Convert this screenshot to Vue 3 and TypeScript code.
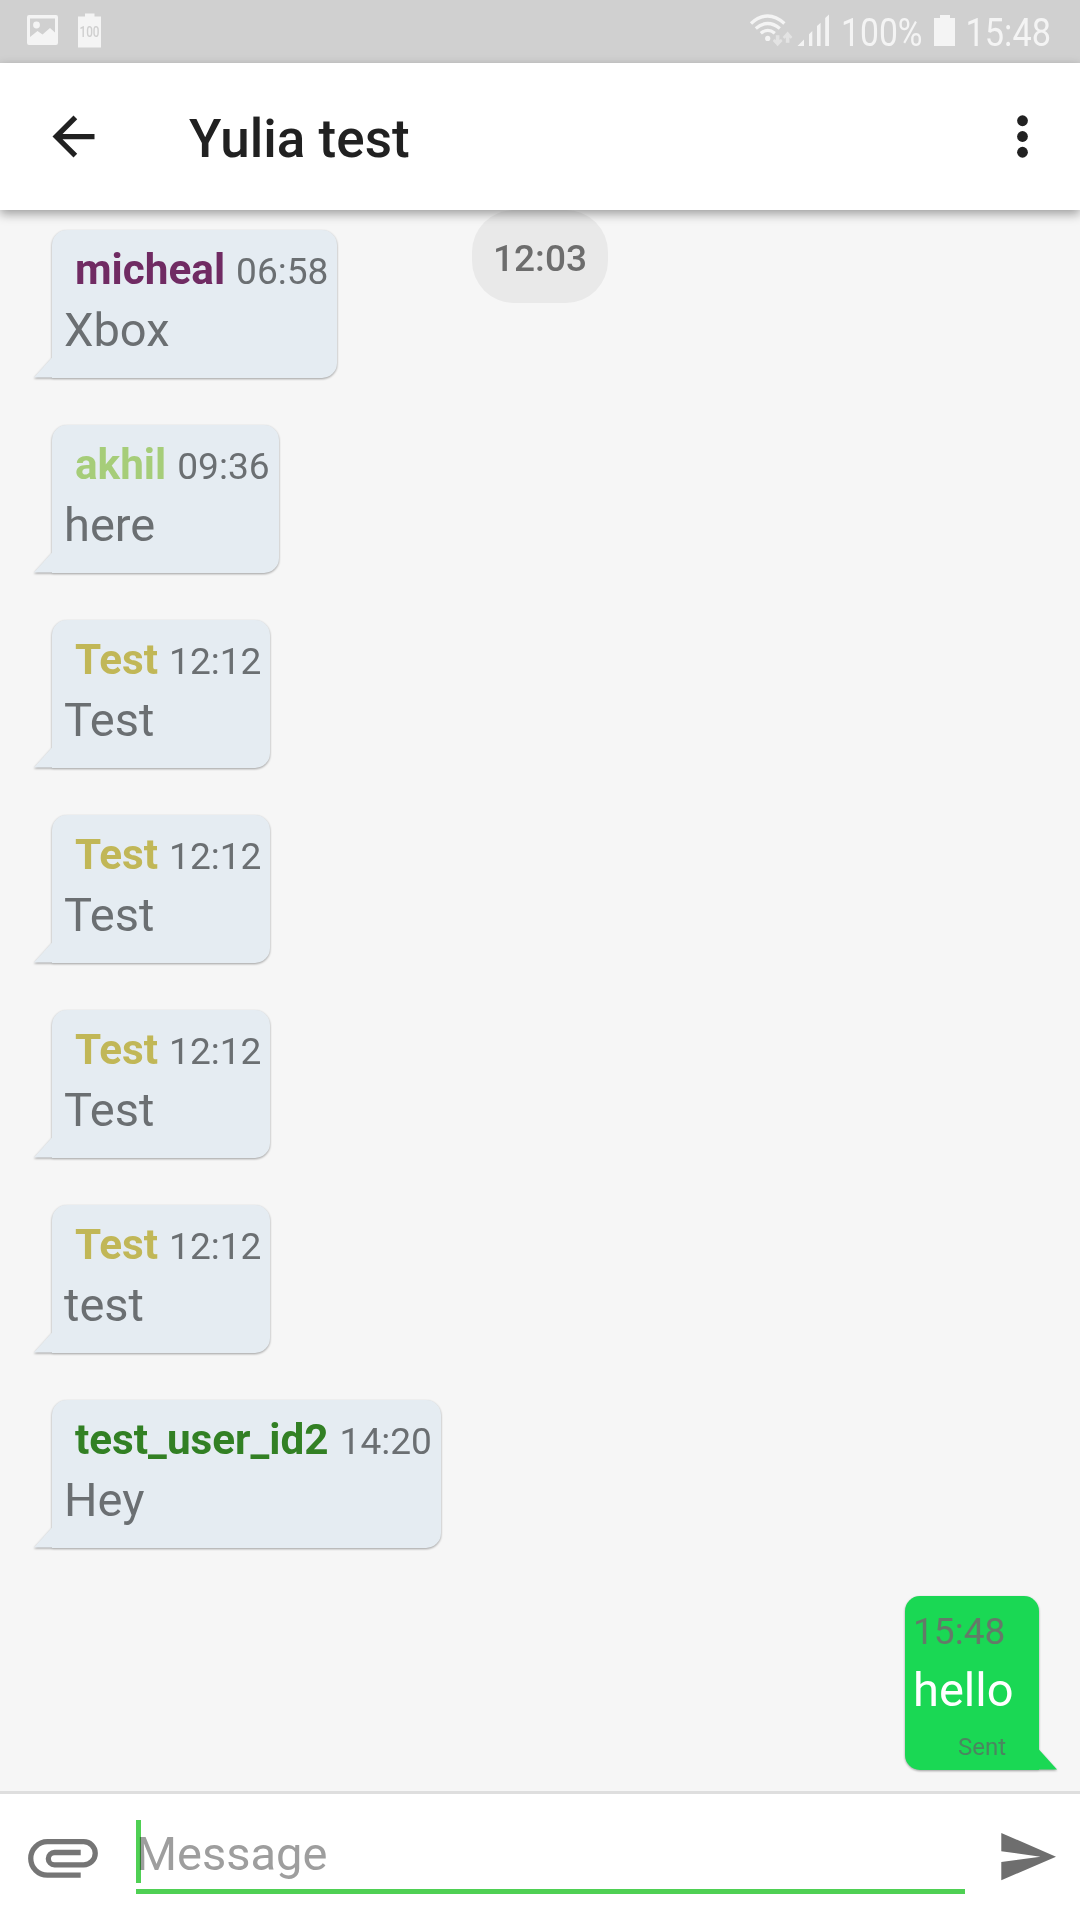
<script setup lang="ts">
interface Message {
  id: number
  author: string
  color: string
  time: string
  text: string
}

const messages: Message[] = [
  { id: 1, author: 'micheal', color: '#702b63', time: '06:58', text: 'Xbox' },
  { id: 2, author: 'akhil', color: '#a6cd79', time: '09:36', text: 'here' },
  { id: 3, author: 'Test', color: '#c1b757', time: '12:12', text: 'Test' },
  { id: 4, author: 'Test', color: '#c1b757', time: '12:12', text: 'Test' },
  { id: 5, author: 'Test', color: '#c1b757', time: '12:12', text: 'Test' },
  { id: 6, author: 'Test', color: '#c1b757', time: '12:12', text: 'test' },
  { id: 7, author: 'test_user_id2', color: '#328024', time: '14:20', text: 'Hey' },
]
</script>

<template>
  <div class="screen">
    <div class="status">
      <svg class="notes" width="120" height="63" viewBox="0 0 120 63">
        <path
          fill="#f4f4f4"
          fill-rule="evenodd"
          d="M29 15H56Q58 15 58 17V43Q58 45 56 45H29Q27 45 27 43V17Q27 15 29 15ZM30 18.500V37L37.500 31L42.500 34.500L50 28L55 32.500V18.500Z"
        />
        <circle cx="36.500" cy="25" r="3.400" fill="#f4f4f4" />
        <path fill="#f4f4f4" d="M85 13.500H94.500V16.500H101V47.500H78V16.500H85Z" />
        <text x="79.500" y="37" textLength="20" lengthAdjust="spacingAndGlyphs" font-size="14" font-weight="500" fill="#cfcfcf">100</text>
      </svg>
      <svg class="indicators" width="340" height="63" viewBox="740 0 340 63">
        <g fill="none" stroke="#f4f4f4" stroke-width="3.300">
          <path d="M751 23.500Q767.700 8.500 784.400 23.500" />
          <path d="M755.800 28.500Q767.700 18.500 779.800 28.500" />
          <path d="M760.800 33.300Q767.700 27.500 774.800 33.300" />
        </g>
        <circle cx="767.700" cy="38.400" r="2.600" fill="#f4f4f4" />
        <path
          fill="#e3e3e3"
          d="M775.800 35.300H779.400V40L781 39L782.500 41L777.600 46.300L772.800 41L774.300 39L775.800 40ZM785.800 42.800H789.400V37.500L790.800 38.800L792.400 37L787.600 31.500L782.700 37L784.300 38.800L785.800 37.500Z"
        />
        <path fill="#f4f4f4" d="M797.500 46L804 39.500V46ZM809 46V34.300L812.300 31V46ZM817 46V26L820.600 22.800V46ZM825.200 46V18L829 14.500V46Z" />
        <text x="841" y="46" textLength="81.500" lengthAdjust="spacingAndGlyphs" font-size="39" fill="#f4f4f4">100%</text>
        <path fill="#f4f4f4" d="M940 15H950V18H955V46H934V18H940Z" />
        <text x="965.500" y="46" textLength="85.500" lengthAdjust="spacingAndGlyphs" font-size="39" fill="#f4f4f4">15:48</text>
      </svg>
    </div>

    <header class="bar">
      <svg class="back" width="63" height="63" viewBox="0 0 24 24">
        <path fill="#212121" d="M20 11H7.830l5.590-5.590L12 4l-8 8 8 8 1.410-1.410L7.830 13H20v-2z" />
      </svg>
      <h1 class="title">Yulia test</h1>
      <svg class="more" width="63" height="63" viewBox="0 0 24 24" fill="#212121">
        <circle cx="12" cy="6" r="2.050" />
        <circle cx="12" cy="12" r="2.050" />
        <circle cx="12" cy="18" r="2.050" />
      </svg>
    </header>

    <main class="chat">
      <div class="chip">12:03</div>
      <article v-for="m in messages" :key="m.id" class="bubble in">
        <div class="meta">
          <span class="author" :style="{ color: m.color }">{{ m.author }}</span>
          <span class="time">{{ m.time }}</span>
        </div>
        <div class="text">{{ m.text }}</div>
      </article>
      <article class="bubble out">
        <span class="time">15:48</span>
        <span class="text">hello</span>
        <span class="state">Sent</span>
      </article>
    </main>

    <footer class="composer">
      <svg class="attach" width="76" height="45" viewBox="25 1836 76 45">
        <path
          fill="none"
          stroke="#757575"
          stroke-width="5.300"
          d="M80.700 1875.200H47.500A16.750 16.750 0 0 1 47.500 1841.700H83.700A11.550 11.550 0 0 1 83.700 1864.800H54.500A6.150 6.150 0 0 1 54.500 1852.500H80.700"
        />
      </svg>
      <div class="field">
        <span class="placeholder">Message</span>
        <i class="caret"></i>
      </div>
      <svg class="send" width="56" height="48" viewBox="0 0 56 48">
        <path fill="#6e6e6e" d="M.3 0L55 23.700L.3 47.300V29L39.500 23.700L.3 18.200Z" />
      </svg>
    </footer>
  </div>
</template>

<style>
body {
  margin: 0;
}
</style>

<style scoped>
.screen {
  width: 1080px;
  height: 1920px;
  display: flex;
  flex-direction: column;
  overflow: hidden;
  background: #f6f6f6;
  font-family: Roboto, 'Liberation Sans', sans-serif;
}
.status {
  height: 63px;
  flex: none;
  display: flex;
  justify-content: space-between;
  background: #d0d0d0;
}
.bar {
  position: relative;
  z-index: 2;
  height: 147px;
  flex: none;
  box-sizing: border-box;
  display: flex;
  align-items: center;
  padding: 0 26px 0 42px;
  background: #fff;
  box-shadow: 0 4px 10px rgba(0, 0, 0, 0.36);
}
.back {
  margin-left: -0.5px;
}
.title {
  flex: 1;
  margin: 4px 0 0 84.5px;
  font-size: 53px;
  font-weight: 500;
  line-height: 62px;
  color: #212121;
}
.chat {
  position: relative;
  flex: 1;
  display: flex;
  flex-direction: column;
  align-items: flex-start;
  gap: 47px;
  padding-top: 19.5px;
}
.chip {
  position: absolute;
  top: 0;
  left: 472px;
  width: 136px;
  height: 93px;
  border-radius: 42px;
  background: #e9e9e9;
  color: #6d6d6d;
  font-size: 37px;
  font-weight: 500;
  line-height: 97px;
  text-align: center;
}
.bubble {
  position: relative;
  box-sizing: border-box;
  filter: drop-shadow(0 1.5px 1px rgba(0, 0, 0, 0.36));
}
.bubble::after {
  content: '';
  position: absolute;
  bottom: 0;
  width: 19px;
  height: 21px;
}
.in {
  height: 148px;
  margin-left: 52px;
  padding: 12px 9px 16px 12px;
  border-radius: 15px 15px 15px 0;
  background: #e5ecf2;
}
.in::after {
  left: -18px;
  background: #e5ecf2;
  clip-path: polygon(100% 0, 100% 100%, 0 100%);
}
.meta {
  display: flex;
  align-items: baseline;
  gap: 11px;
  padding-left: 11px;
  line-height: 56px;
}
.author {
  font-size: 42.25px;
  font-weight: 700;
}
.time {
  font-size: 37.1px;
  color: #6b6f72;
}
.text {
  font-size: 47px;
  line-height: 60px;
  color: #6b6f72;
}
.out {
  align-self: flex-end;
  display: flex;
  flex-direction: column;
  width: 134.5px;
  height: 174px;
  margin-right: 41px;
  margin-top: 1px;
  padding: 8px 0 0 8.5px;
  border-radius: 15px 15px 0 15px;
  background: #1ad854;
}
.out::after {
  right: -18px;
  background: #1ad854;
  clip-path: polygon(0 0, 100% 100%, 0 100%);
}
.out .time {
  line-height: 56px;
  color: #647a69;
}
.out .text {
  line-height: 59px;
  color: #fff;
}
.out .state {
  margin-left: 45px;
  font-size: 24px;
  line-height: 57px;
  color: #4b8560;
}
.composer {
  height: 129px;
  flex: none;
  box-sizing: border-box;
  display: flex;
  align-items: flex-start;
  border-top: 3px solid #dedede;
  background: #fff;
}
.attach {
  margin: 42px 0 0 25px;
}
.field {
  position: relative;
  width: 829px;
  height: 100px;
  box-sizing: border-box;
  margin-left: 35px;
  padding-top: 28px;
  border-bottom: 5px solid #4fd054;
}
.placeholder {
  display: block;
  font-size: 47px;
  line-height: 64px;
  color: #9e9e9e;
}
.caret {
  position: absolute;
  left: 0;
  top: 26px;
  width: 5px;
  height: 63px;
  background: #4fd054;
  mix-blend-mode: multiply;
}
.send {
  margin: 39px 0 0 36px;
}
</style>
